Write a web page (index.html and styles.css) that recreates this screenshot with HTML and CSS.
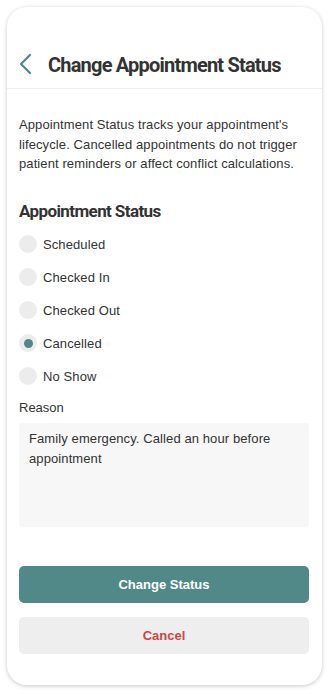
FILE: index.html
```html
<!DOCTYPE html>
<html lang="en">
<head>
<meta charset="utf-8">
<title>Change Appointment Status</title>
<link rel="stylesheet" href="styles.css">
</head>
<body>
<div class="card">
  <header class="header">
    <svg class="back" width="14" height="22" viewBox="0 0 14 22" aria-hidden="true">
      <path d="M12 2 L3 11 L12 20" fill="none" stroke="#4f8886" stroke-width="2.2" stroke-linecap="round" stroke-linejoin="round"/>
    </svg>
    <h1 class="title">Change Appointment Status</h1>
  </header>
  <main class="content">
    <p class="desc">Appointment Status tracks your appointment's lifecycle. Cancelled appointments do not trigger patient reminders or affect conflict calculations.</p>
    <h2 class="section">Appointment Status</h2>
    <div class="radios">
      <div class="radio"><span class="dot"></span><span class="label">Scheduled</span></div>
      <div class="radio"><span class="dot"></span><span class="label">Checked In</span></div>
      <div class="radio"><span class="dot"></span><span class="label">Checked Out</span></div>
      <div class="radio selected"><span class="dot"></span><span class="label">Cancelled</span></div>
      <div class="radio"><span class="dot"></span><span class="label">No Show</span></div>
    </div>
    <div class="reason-label">Reason</div>
    <div class="reason">Family emergency. Called an hour before appointment</div>
    <div class="buttons">
      <button class="btn primary">Change Status</button>
      <button class="btn cancel">Cancel</button>
    </div>
  </main>
</div>
</body>
</html>
```
FILE: styles.css
```css
html, body {
  margin: 0;
  padding: 0;
  background: #ffffff;
}

body {
  padding: 7px 9px 9px 7px;
  font-family: "Liberation Sans", Arial, sans-serif;
  color: #333333;
}

.card {
  box-sizing: border-box;
  width: 315px;
  height: 678px;
  background: #ffffff;
  border-radius: 20px;
  box-shadow: 0 1px 4px rgba(0, 0, 0, 0.22);
  display: flex;
  flex-direction: column;
}

.header {
  display: flex;
  align-items: center;
  padding: 46px 12px 11px 11px;
  border-bottom: 1px solid #eeeeee;
  height: 24px;
}

.back {
  display: block;
  flex: none;
  margin-top: -2px;
}

.title {
  margin: 0 0 0 16px;
  font-family: Roboto, "Liberation Sans", sans-serif;
  font-weight: 700;
  font-size: 20px;
  line-height: 24px;
  letter-spacing: -0.8px;
  color: #333333;
  white-space: nowrap;
}

.content {
  padding: 0 13px 0 12px;
  display: flex;
  flex-direction: column;
}

.desc {
  margin: 26px 0 0 0;
  font-size: 13px;
  line-height: 19.5px;
  letter-spacing: 0.1px;
  color: #333333;
}

.section {
  margin: 27px 0 0 0;
  font-family: Roboto, "Liberation Sans", sans-serif;
  font-weight: 700;
  font-size: 17px;
  line-height: 20px;
  letter-spacing: -0.6px;
  color: #333333;
}

.radios {
  margin-top: 7px;
  display: flex;
  flex-direction: column;
}

.radio {
  height: 33px;
  display: flex;
  align-items: center;
}

.dot {
  box-sizing: border-box;
  width: 18px;
  height: 18px;
  border-radius: 50%;
  background: #ececec;
  flex: none;
  display: flex;
  align-items: center;
  justify-content: center;
}

.radio.selected .dot::after {
  content: "";
  width: 9px;
  height: 9px;
  border-radius: 50%;
  background: #4f8886;
}

.label {
  margin-left: 6px;
  font-size: 13px;
  letter-spacing: 0.1px;
  color: #333333;
}

.reason-label {
  margin-top: 7px;
  font-size: 13px;
  line-height: 16px;
  color: #333333;
}

.reason {
  box-sizing: border-box;
  margin-top: 7px;
  height: 104px;
  padding: 6px 10px;
  background: #f7f7f7;
  border-radius: 4px;
  font-size: 13px;
  line-height: 20px;
  letter-spacing: 0.1px;
  color: #333333;
}

.buttons {
  margin-top: 39px;
  display: flex;
  flex-direction: column;
  gap: 14px;
}

.btn {
  height: 37px;
  border: none;
  border-radius: 5px;
  font-family: "Liberation Sans", Arial, sans-serif;
  font-weight: 700;
  font-size: 13px;
  padding: 0;
}

.btn.primary {
  background: #508987;
  color: #ffffff;
}

.btn.cancel {
  background: #eeeeee;
  color: #cc4646;
}
```
